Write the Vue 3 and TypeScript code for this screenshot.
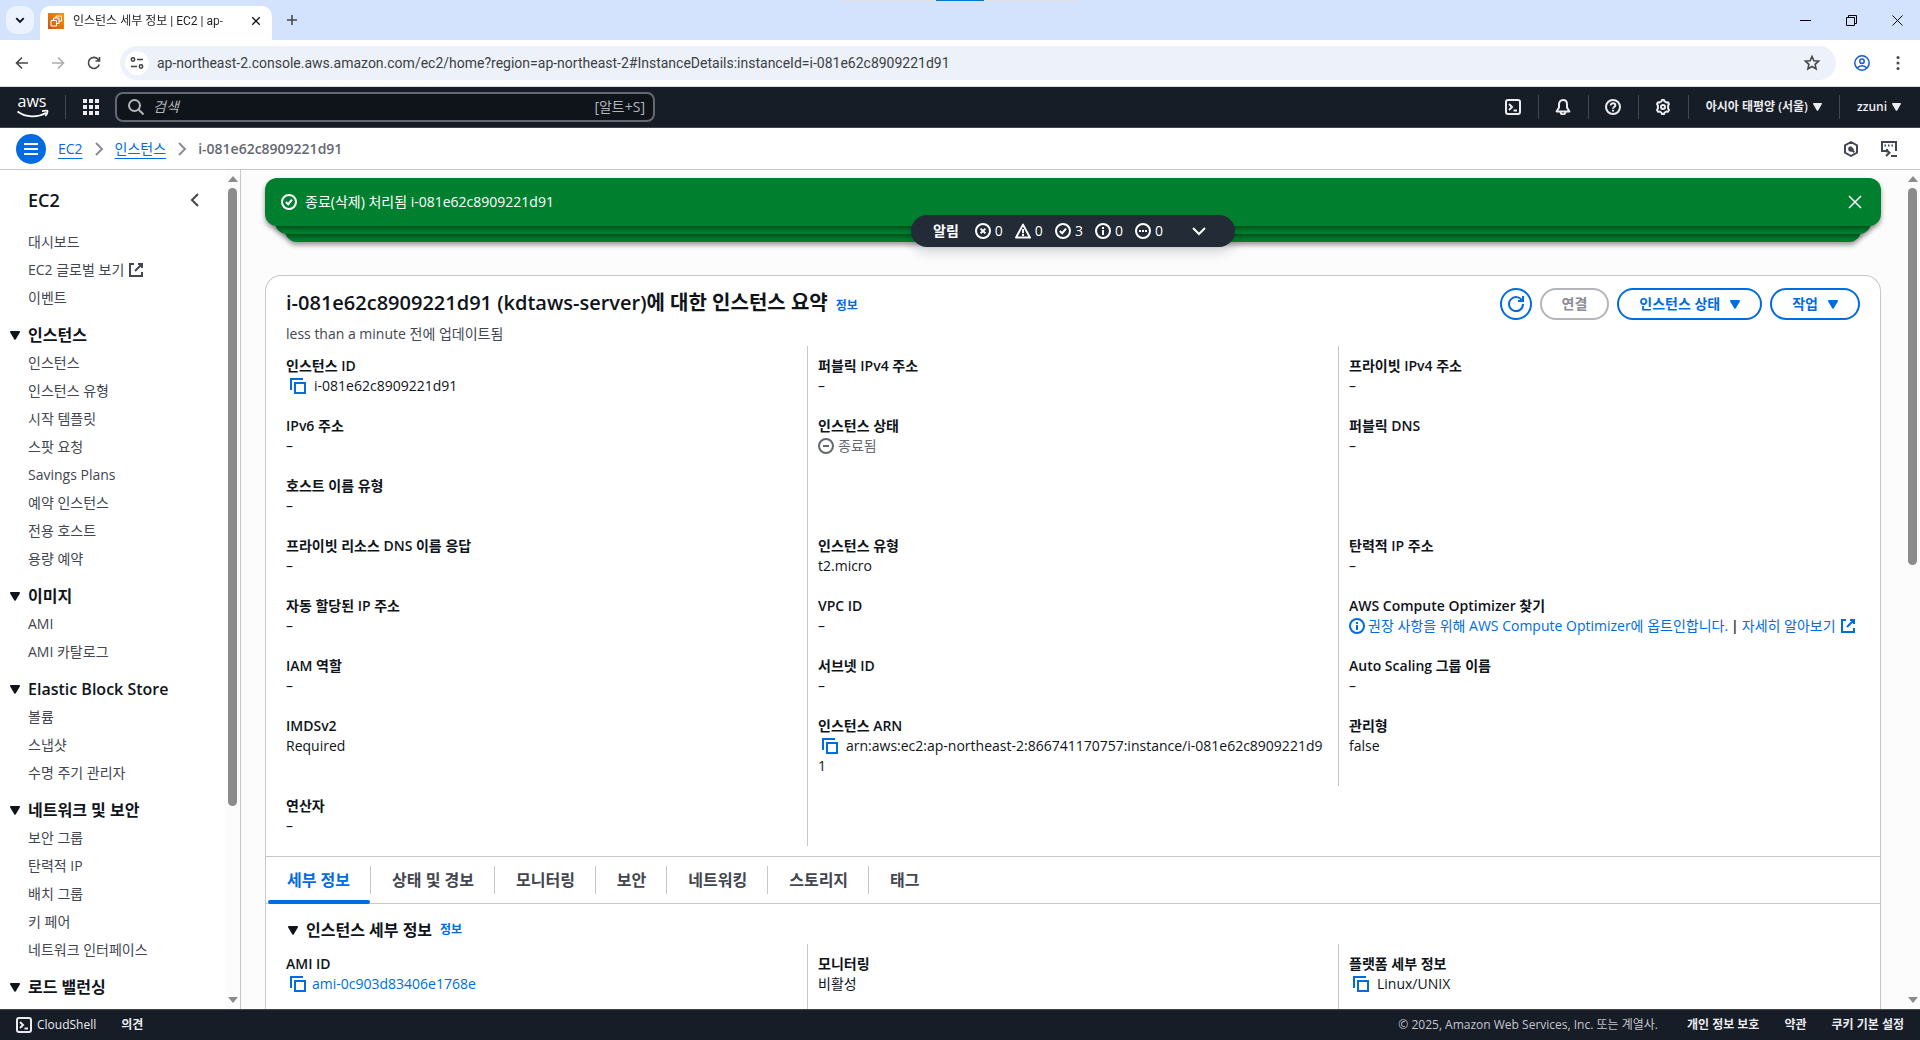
<script setup lang="ts">
import { ref } from 'vue'

interface NavLink {
  label: string
  external?: boolean
}

interface NavSection {
  title: string
  links: NavLink[]
}

interface Field {
  label: string
  value?: string
  kind?: 'copy' | 'copy-link' | 'status' | 'optimizer' | 'arn'
}

const topLinks: NavLink[] = [
  { label: '대시보드' },
  { label: 'EC2 글로벌 보기', external: true },
  { label: '이벤트' },
]

const toLinks = (...labels: string[]): NavLink[] => labels.map((label) => ({ label }))

const sections: NavSection[] = [
  {
    title: '인스턴스',
    links: toLinks('인스턴스', '인스턴스 유형', '시작 템플릿', '스팟 요청', 'Savings Plans', '예약 인스턴스', '전용 호스트', '용량 예약'),
  },
  { title: '이미지', links: toLinks('AMI', 'AMI 카탈로그') },
  { title: 'Elastic Block Store', links: toLinks('볼륨', '스냅샷', '수명 주기 관리자') },
  { title: '네트워크 및 보안', links: toLinks('보안 그룹', '탄력적 IP', '배치 그룹', '키 페어', '네트워크 인터페이스') },
  { title: '로드 밸런싱', links: [] },
]

// An entry without a label is an empty cell that only carries the column rule.
const summary: Field[] = [
  { label: '인스턴스 ID', value: 'i-081e62c8909221d91', kind: 'copy' },
  { label: '퍼블릭 IPv4 주소', value: '–' },
  { label: '프라이빗 IPv4 주소', value: '–' },
  { label: 'IPv6 주소', value: '–' },
  { label: '인스턴스 상태', value: '종료됨', kind: 'status' },
  { label: '퍼블릭 DNS', value: '–' },
  { label: '호스트 이름 유형', value: '–' },
  { label: '' },
  { label: '' },
  { label: '프라이빗 리소스 DNS 이름 응답', value: '–' },
  { label: '인스턴스 유형', value: 't2.micro' },
  { label: '탄력적 IP 주소', value: '–' },
  { label: '자동 할당된 IP 주소', value: '–' },
  { label: 'VPC ID', value: '–' },
  { label: 'AWS Compute Optimizer 찾기', kind: 'optimizer' },
  { label: 'IAM 역할', value: '–' },
  { label: '서브넷 ID', value: '–' },
  { label: 'Auto Scaling 그룹 이름', value: '–' },
  { label: 'IMDSv2', value: 'Required' },
  { label: '인스턴스 ARN', kind: 'arn' },
  { label: '관리형', value: 'false' },
  { label: '연산자', value: '–' },
  { label: '' },
]

const details: Field[] = [
  { label: 'AMI ID', value: 'ami-0c903d83406e1768e', kind: 'copy-link' },
  { label: '모니터링', value: '비활성' },
  { label: '플랫폼 세부 정보', value: 'Linux/UNIX', kind: 'copy' },
]

const tabs = ['세부 정보', '상태 및 경보', '모니터링', '보안', '네트워킹', '스토리지', '태그']
const activeTab = ref(0)

const notices = [
  { icon: 'error', count: 0 },
  { icon: 'warning', count: 0 },
  { icon: 'success', count: 3 },
  { icon: 'info', count: 0 },
  { icon: 'pending', count: 0 },
]

const url = ref('ap-northeast-2.console.aws.amazon.com/ec2/home?region=ap-northeast-2#InstanceDetails:instanceId=i-081e62c8909221d91')
const query = ref('')
</script>

<template>
  <div class="window">
    <svg class="sprite" aria-hidden="true">
      <symbol id="copy" viewBox="0 0 16 16"><path d="M13 1H1v11M5 5h10v10H5z" /></symbol>
      <symbol id="external" viewBox="0 0 16 16"><path d="M10 2h4v4M7 9l7-7M14 10v4H2V2h4" /></symbol>
      <symbol id="success" viewBox="0 0 16 16"><circle cx="8" cy="8" r="7" /><path d="m4.8 8 2.4 2.2 3.8-4.6" /></symbol>
      <symbol id="error" viewBox="0 0 16 16"><circle cx="8" cy="8" r="7" /><path d="m5.6 5.6 4.8 4.8M10.4 5.6l-4.8 4.8" /></symbol>
      <symbol id="warning" viewBox="0 0 16 16"><path d="M8 1.6 15 14.6H1zM8 6v4.2M8 11v2" stroke-linejoin="round" /></symbol>
      <symbol id="info" viewBox="0 0 16 16"><circle cx="8" cy="8" r="7" /><path d="M8 7v5M8 4v2" /></symbol>
      <symbol id="pending" viewBox="0 0 16 16"><circle cx="8" cy="8" r="7" /><path d="M4 8h2M7 8h2M10 8h2" /></symbol>
      <symbol id="stopped" viewBox="0 0 16 16"><circle cx="8" cy="8" r="7" /><path d="M5 8h6" /></symbol>
      <symbol id="refresh" viewBox="0 0 16 16"><path d="M15 0v5h-5M15 8A7 7 0 1 1 14.3 5" /></symbol>
      <symbol id="close" viewBox="0 0 16 16"><path d="m2 2 12 12M14 2 2 14" /></symbol>
      <symbol id="down" viewBox="0 0 16 16"><path d="m2 5 6 6 6-6" /></symbol>
      <symbol id="left" viewBox="0 0 16 16"><path d="M11 2 5 8l6 6" /></symbol>
      <symbol id="right" viewBox="0 0 16 16"><path d="m5 2 6 6-6 6" /></symbol>
      <symbol id="caret" viewBox="0 0 10 9"><path class="solid" d="M1 0h8a1 1 0 0 1 .8 1.5l-4 6.8a1 1 0 0 1-1.6 0l-4-6.8A1 1 0 0 1 1 0z" /></symbol>
      <symbol id="shell" viewBox="0 0 16 16"><rect x="1" y="1" width="14" height="14" rx="2" /><path d="m4 5 3 3-3 3M8.5 11.5H12" /></symbol>
      <symbol id="bell" viewBox="0 0 16 16"><path d="M8 1C5.4 1 4 3 4 5.4v3.2L1.6 12.5h12.8L12 8.6V5.4C12 3 10.6 1 8 1z" stroke-linejoin="round" /><path d="M5.6 13c0 3.3 4.8 3.3 4.8 0" /></symbol>
      <symbol id="help" viewBox="0 0 16 16"><circle cx="8" cy="8" r="7" /><path d="M5.8 6.4c0-3 4.5-2.7 4.5 0C10.3 8 8 8 8 9.8M8 10.7v1.8" /></symbol>
      <symbol id="gear" viewBox="0 0 16 16"><path d="M6.3 2.5 7 1h2l.7 1.5 1.6.9 1.7-.1 1 1.700-.9 1.500v3l.9 1.500-1 1.700-1.700-.1-1.600.9L9 15H7l-.7-1.500-1.600-.9-1.700.1L2 11l.9-1.500v-3L2 5l1-1.700 1.700.1z" stroke-linejoin="round" /><circle cx="8" cy="8" r="2" /></symbol>
      <symbol id="search" viewBox="0 0 16 16"><circle cx="6.5" cy="6.5" r="5.5" /><path d="m10.5 10.5 5 5" /></symbol>
      <symbol id="grid" viewBox="0 0 16 16"><path class="solid" d="M0 0h4v4H0zM6 0h4v4H6zM12 0h4v4h-4zM0 6h4v4H0zM6 6h4v4H6zM12 6h4v4h-4zM0 12h4v4H0zM6 12h4v4H6zM12 12h4v4h-4z" /></symbol>
      <symbol id="menu" viewBox="0 0 16 16"><path d="M1 3h14M1 8h14M1 13h14" /></symbol>
      <symbol id="hexagon" viewBox="0 0 16 16"><path d="m8 1 6 3.4v7.2L8 15l-6-3.400V4.400z" stroke-linejoin="round" /><path class="solid" d="M8 5.200A2.800 2.800 0 1 0 10.800 8z" /><path d="m8 8 3.200 3.200" /></symbol>
      <symbol id="tour" viewBox="0 0 16 16"><path d="M5 10H1V1h14v9M10 15h6M6 8v3.500M5 15l3.500-3.200L5 8.500" /><path d="M3.500 4.500h1.500M7 4.500h1.500M10.500 4.500H12" /></symbol>
      <symbol id="up-arrow" viewBox="0 0 10 6"><path class="solid" d="M0 6 5 0l5 6z" /></symbol>
      <symbol id="down-arrow" viewBox="0 0 10 6"><path class="solid" d="m0 0 5 6 5-6z" /></symbol>
    </svg>

    <div class="tab-strip">
      <button class="tab-search" aria-label="탭 검색"><svg class="icon tiny"><use href="#down" /></svg></button>
      <div class="browser-tab">
        <svg class="favicon" viewBox="0 0 16 16">
          <defs>
            <linearGradient id="ec2" x1="0" y1="1" x2="1" y2="0"><stop stop-color="#c8511b" /><stop offset="1" stop-color="#f90" /></linearGradient>
          </defs>
          <path d="M0 0h16v16H0z" fill="url(#ec2)" />
          <path d="M3 7.500h5.500V13H3zM5.500 7.500V5H11v5.500H8.500M8 5V3h5.500v5.200H11" fill="none" stroke="#fff" stroke-width="1" />
        </svg>
        <span class="tab-title">인스턴스 세부 정보 | EC2 | ap-</span>
        <button class="bare" aria-label="탭 닫기"><svg class="icon tab-close"><use href="#close" /></svg></button>
      </div>
      <button class="bare new-tab" aria-label="새 탭">
        <svg class="chrome-icon" viewBox="0 0 20 20"><path d="M10 5v10M5 10h10" /></svg>
      </button>
      <div class="snap-bar"><i></i></div>
      <div class="window-controls">
        <button class="bare" aria-label="최소화"><svg class="win" viewBox="0 0 11 11"><path d="M0 5.500h11" /></svg></button>
        <button class="bare" aria-label="이전 크기로 복원"><svg class="win" viewBox="0 0 11 11"><path d="M.5 2.500h8v8h-8zM2.500 2.500v-2h8v8h-2" /></svg></button>
        <button class="bare" aria-label="닫기"><svg class="win" viewBox="0 0 11 11"><path d="m.5.5 10 10M10.500.5l-10 10" /></svg></button>
      </div>
    </div>

    <div class="toolbar">
      <button class="bare" aria-label="뒤로"><svg class="chrome-icon" viewBox="0 0 20 20"><path d="M16 10H5M10 4.500 4.500 10l5.500 5.500" /></svg></button>
      <button class="bare faded" aria-label="앞으로"><svg class="chrome-icon" viewBox="0 0 20 20"><path d="M4 10h11M10 4.500l5.500 5.500-5.500 5.500" /></svg></button>
      <button class="bare" aria-label="새로고침"><svg class="chrome-icon" viewBox="0 0 20 20"><path d="M15.200 11.500A5.500 5.500 0 1 1 14 6.200L15.500 8M15.500 4v4h-4" /></svg></button>
      <label class="address">
        <span class="site-info">
          <svg viewBox="0 0 16 16"><circle cx="4" cy="4.500" r="1.700" /><path d="M8 4.500h6M2 11.500h6" /><circle cx="12" cy="11.500" r="1.700" /></svg>
        </span>
        <input v-model="url" type="text" aria-label="주소창" />
        <svg class="chrome-icon" viewBox="0 0 20 20"><path d="m10 3.500 1.900 4.300 4.700.4-3.500 3.100 1 4.600L10 13.500l-4.100 2.400 1-4.600-3.500-3.100 4.700-.4z" /></svg>
      </label>
      <div class="browser-tools">
        <button class="bare" aria-label="프로필">
          <svg class="profile" viewBox="0 0 16 16"><circle cx="8" cy="8" r="7.200" /><circle cx="8" cy="6.200" r="2.200" /><path d="M3.200 13c2.600-3 7-3 9.600 0" /></svg>
        </button>
        <button class="bare" aria-label="메뉴">
          <svg class="dots" viewBox="0 0 4 16"><circle cx="2" cy="2.500" r="1.500" /><circle cx="2" cy="8" r="1.500" /><circle cx="2" cy="13.500" r="1.500" /></svg>
        </button>
      </div>
    </div>

    <header class="aws-bar">
      <a class="logo" href="#" aria-label="AWS">
        <svg viewBox="0 0 32 24">
          <text x="1" y="12">aws</text>
          <path d="M1 16.500c8.500 6.200 20 6.400 28.500 1.200" />
          <path d="M25.500 16.200c3-.9 5.600-.7 5.600-.2s-.5 3-2.300 5" />
        </svg>
      </a>
      <button class="bare services" aria-label="서비스"><svg class="icon"><use href="#grid" /></svg></button>
      <label class="search">
        <svg class="icon"><use href="#search" /></svg>
        <input v-model="query" type="text" placeholder="검색" aria-label="검색" />
        <span>[알트+S]</span>
      </label>
      <nav class="aws-tools">
        <button class="bare tool" aria-label="CloudShell"><svg class="icon"><use href="#shell" /></svg></button>
        <button class="bare tool" aria-label="알림"><svg class="icon"><use href="#bell" /></svg></button>
        <button class="bare tool" aria-label="도움말"><svg class="icon"><use href="#help" /></svg></button>
        <button class="bare tool" aria-label="설정"><svg class="icon"><use href="#gear" /></svg></button>
        <button class="bare menu-button">아시아 태평양 (서울)<svg class="caret small"><use href="#caret" /></svg></button>
        <button class="bare menu-button">zzuni<svg class="caret small"><use href="#caret" /></svg></button>
      </nav>
    </header>

    <div class="crumb-bar">
      <button class="hamburger" aria-label="탐색 메뉴"><svg class="icon"><use href="#menu" /></svg></button>
      <nav class="crumbs">
        <a href="#">EC2</a>
        <svg class="icon sep"><use href="#right" /></svg>
        <a href="#">인스턴스</a>
        <svg class="icon sep"><use href="#right" /></svg>
        <strong>i-081e62c8909221d91</strong>
      </nav>
      <div class="crumb-tools">
        <button class="bare" aria-label="Amazon Q"><svg class="icon"><use href="#hexagon" /></svg></button>
        <button class="bare" aria-label="튜토리얼"><svg class="icon"><use href="#tour" /></svg></button>
      </div>
    </div>

    <div class="body">
      <aside class="sidebar">
        <div class="side-content">
          <div class="side-head">
            <h2>EC2</h2>
            <button class="bare" aria-label="탐색 닫기"><svg class="icon"><use href="#left" /></svg></button>
          </div>
          <ul>
            <li v-for="link in topLinks" :key="link.label">
              <a href="#">{{ link.label }}<svg v-if="link.external" class="icon ext"><use href="#external" /></svg></a>
            </li>
          </ul>
          <section v-for="section in sections" :key="section.title">
            <h3><svg class="caret"><use href="#caret" /></svg>{{ section.title }}</h3>
            <ul>
              <li v-for="link in section.links" :key="link.label"><a href="#">{{ link.label }}</a></li>
            </ul>
          </section>
        </div>
        <div class="scrollbar side-scroll">
          <svg><use href="#up-arrow" /></svg>
          <div class="track"><i></i></div>
          <svg><use href="#down-arrow" /></svg>
        </div>
      </aside>

      <main>
        <div class="page">
          <div class="flashbar">
            <div class="flash" role="status">
              <svg class="icon"><use href="#success" /></svg>
              <span>종료(삭제) 처리됨 i-081e62c8909221d91</span>
              <button class="bare" aria-label="닫기"><svg class="icon thin"><use href="#close" /></svg></button>
            </div>
            <div class="layer second"></div>
            <div class="layer third"></div>
            <div class="notice-anchor">
              <button class="notices">
                <b>알림</b>
                <span class="counts">
                  <span v-for="notice in notices" :key="notice.icon"><svg class="icon"><use :href="'#' + notice.icon" /></svg>{{ notice.count }}</span>
                </span>
                <svg class="icon"><use href="#down" /></svg>
              </button>
            </div>
          </div>

          <div class="card">
            <div class="card-head">
              <div class="heading">
                <div class="title-line">
                  <h1>i-081e62c8909221d91 (kdtaws-server)에 대한 인스턴스 요약</h1>
                  <a class="info" href="#">정보</a>
                </div>
                <p>less than a minute 전에 업데이트됨</p>
              </div>
              <div class="actions">
                <button class="btn round" aria-label="새로 고침"><svg class="icon"><use href="#refresh" /></svg></button>
                <button class="btn" disabled>연결</button>
                <button class="btn">인스턴스 상태<svg class="caret"><use href="#caret" /></svg></button>
                <button class="btn">작업<svg class="caret"><use href="#caret" /></svg></button>
              </div>
            </div>

            <dl class="fields">
              <div v-for="(field, i) in summary" :key="i">
                <template v-if="field.label">
                  <dt>{{ field.label }}</dt>
                  <dd v-if="field.kind === 'copy'"><button class="bare copy" aria-label="복사"><svg class="icon"><use href="#copy" /></svg></button>{{ field.value }}</dd>
                  <dd v-else-if="field.kind === 'status'" class="stopped"><svg class="icon lead"><use href="#stopped" /></svg>{{ field.value }}</dd>
                  <dd v-else-if="field.kind === 'optimizer'" class="optimizer">
                    <svg class="icon blue"><use href="#info" /></svg>
                    <a href="#">권장 사항을 위해 AWS Compute Optimizer에 옵트인합니다.</a>
                    <b>|</b>
                    <a href="#">자세히 알아보기<svg class="icon ext"><use href="#external" /></svg></a>
                  </dd>
                  <dd v-else-if="field.kind === 'arn'"><button class="bare copy" aria-label="복사"><svg class="icon"><use href="#copy" /></svg></button>arn:aws:ec2:ap-northeast-2:866741170757:instance/i-081e62c8909221d9<br />1</dd>
                  <dd v-else>{{ field.value }}</dd>
                </template>
              </div>
            </dl>

            <div class="tabs" role="tablist">
              <div v-for="(tab, i) in tabs" :key="tab" class="tab">
                <button role="tab" :class="{ active: i === activeTab }" :aria-selected="i === activeTab" @click="activeTab = i">{{ tab }}</button>
              </div>
            </div>

            <div class="expander">
              <svg class="caret"><use href="#caret" /></svg>
              <h2>인스턴스 세부 정보</h2>
              <a class="info" href="#">정보</a>
            </div>
            <dl class="fields grow">
              <div v-for="field in details" :key="field.label">
                <dt>{{ field.label }}</dt>
                <dd>
                  <button v-if="field.kind" class="bare copy" :class="{ tight: field.kind === 'copy-link' }" aria-label="복사"><svg class="icon"><use href="#copy" /></svg></button>
                  <a v-if="field.kind === 'copy-link'" href="#">{{ field.value }}</a>
                  <template v-else>{{ field.value }}</template>
                </dd>
              </div>
            </dl>
          </div>
        </div>
        <div class="scrollbar page-scroll">
          <svg><use href="#up-arrow" /></svg>
          <div class="track"><i></i></div>
          <svg><use href="#down-arrow" /></svg>
        </div>
      </main>
    </div>

    <footer>
      <a class="cloudshell" href="#"><svg class="icon"><use href="#shell" /></svg>CloudShell</a>
      <a href="#">의견</a>
      <span>© 2025, Amazon Web Services, Inc. 또는 계열사.</span>
      <a href="#">개인 정보 보호</a>
      <a href="#">약관</a>
      <a href="#">쿠키 기본 설정</a>
    </footer>
  </div>
</template>

<style>
body {
  background: #fff;
}
</style>

<style scoped>
.window {
  position: relative;
  display: flex;
  flex-direction: column;
  height: 100vh;
  overflow: hidden;
  color: #0f141a;
  font: 14px/20px "Open Sans", "Noto Sans CJK KR", sans-serif;
}

*,
*::before,
*::after {
  box-sizing: border-box;
}

h1, h2, h3, p, ul, dl, dd {
  margin: 0;
  padding: 0;
}

h1, h2, h3, b, strong {
  font-weight: 600;
}

ul {
  list-style: none;
}

a {
  color: #006ce0;
  text-decoration: none;
}

button,
input {
  font: inherit;
  color: inherit;
}

.bare {
  display: inline-flex;
  align-items: center;
  justify-content: center;
  padding: 0;
  border: 0;
  background: none;
}

.sprite {
  position: absolute;
  width: 0;
  height: 0;
}

.icon {
  flex: none;
  width: 16px;
  height: 16px;
  fill: none;
  stroke: currentColor;
  stroke-width: 2;
}

.thin {
  stroke-width: 1.5;
}

.solid {
  fill: currentColor;
  stroke: none;
}

.caret {
  flex: none;
  width: 10px;
  height: 9px;
}

/* Browser frame */
.tab-strip {
  position: relative;
  display: flex;
  flex: none;
  align-items: center;
  height: 40px;
  padding-left: 6px;
  background: #d3e3fd;
  font-family: Roboto, "Noto Sans CJK KR", sans-serif;
  font-size: 12px;
}

.tab-search {
  display: flex;
  flex: none;
  align-items: center;
  justify-content: center;
  width: 28px;
  height: 28px;
  border: 0;
  border-radius: 10px;
  background: #ecf3fe;
}

.tiny {
  width: 10px;
  height: 10px;
  stroke-width: 3;
}

.browser-tab {
  display: flex;
  flex: none;
  align-self: flex-end;
  align-items: center;
  width: 232px;
  height: 34px;
  margin-left: 6px;
  padding: 0 11px 4px 8px;
  border-radius: 10px 10px 0 0;
  background: #fff;
}

.favicon {
  flex: none;
  width: 16px;
  height: 16px;
}

.tab-title {
  flex: 1;
  margin: 0 12px 0 9px;
  white-space: nowrap;
  color: #1f1f1f;
  mask-image: linear-gradient(90deg, #000 86%, transparent);
}

.tab-close {
  width: 10px;
  height: 10px;
}

.chrome-icon {
  flex: none;
  width: 20px;
  height: 20px;
  fill: none;
  stroke: #474747;
  stroke-width: 1.6;
}

.new-tab {
  margin-left: 10px;
}

.snap-bar {
  position: absolute;
  top: 0;
  right: 0;
  left: 0;
  display: flex;
  justify-content: center;
  width: 240px;
  height: 1px;
  margin: 0 auto;
  background: #e2e2e2;
}

.snap-bar i {
  width: 48px;
  background: #0078d4;
}

.window-controls {
  display: flex;
  align-self: stretch;
  margin-left: auto;
}

.window-controls .bare {
  width: 46px;
}

.win {
  width: 11px;
  height: 11px;
  fill: none;
  stroke: #000;
  stroke-width: 1;
}

.toolbar {
  display: flex;
  flex: none;
  align-items: center;
  gap: 16px;
  height: 47px;
  padding: 0 20px 0 12px;
  border-bottom: 1px solid #dadce0;
  background: #fff;
}

.faded {
  opacity: 0.45;
}

.address {
  display: flex;
  flex: 1;
  align-items: center;
  height: 34px;
  padding: 0 14px 0 5px;
  border-radius: 17px;
  background: #ecf1fa;
}

.site-info {
  display: flex;
  align-items: center;
  justify-content: center;
  width: 24px;
  height: 24px;
  border-radius: 12px;
  background: #fff;
}

.site-info svg {
  width: 16px;
  height: 16px;
  fill: none;
  stroke: #3c4043;
  stroke-width: 1.5;
}

.address input {
  flex: 1;
  min-width: 0;
  margin-left: 8px;
  padding: 0;
  border: 0;
  outline: 0;
  background: none;
  color: #3c3f43;
  font-family: Roboto, "Noto Sans CJK KR", sans-serif;
}

.browser-tools {
  display: flex;
  gap: 26px;
  padding-left: 2px;
}

.profile {
  width: 16px;
  height: 16px;
  fill: none;
  stroke: #1558d6;
  stroke-width: 1.5;
}

.dots {
  width: 4px;
  height: 16px;
  fill: #474747;
}

/* AWS header */
.aws-bar {
  display: flex;
  flex: none;
  align-items: center;
  height: 41px;
  padding: 0 4px 0 16px;
  border-bottom: 1px solid #424650;
  background: #161d26;
  color: #ebebf0;
}

.logo {
  display: flex;
  align-items: center;
  width: 50px;
  height: 24px;
  border-right: 1px solid #424650;
}

.logo svg {
  width: 33px;
  height: 24px;
  overflow: visible;
  fill: none;
  stroke: #fff;
  stroke-width: 1.8;
}

.logo text {
  fill: #fff;
  stroke: none;
  font-size: 16px;
  font-weight: 500;
}

.services {
  width: 49px;
}

.search {
  display: flex;
  align-items: center;
  width: 540px;
  height: 30px;
  padding: 0 8px 0 11px;
  border: 2px solid #656871;
  border-radius: 8px;
  background: #0f141a;
  color: #b4b4bb;
}

.search input {
  flex: 1;
  min-width: 0;
  margin-left: 9px;
  padding: 0;
  border: 0;
  outline: 0;
  background: none;
}

.search input::placeholder {
  color: #b4b4bb;
  font-style: italic;
}

.aws-tools {
  display: flex;
  margin-left: auto;
}

.tool {
  width: 50px;
  height: 24px;
  border-right: 1px solid #424650;
}

.menu-button {
  gap: 5px;
  height: 24px;
  padding: 0 17px;
  font-size: 12px;
  font-weight: 600;
}

.menu-button:last-child {
  padding-right: 15px;
  border-left: 1px solid #424650;
}

.small {
  width: 9px;
  height: 8px;
}

/* Breadcrumbs */
.crumb-bar {
  display: flex;
  flex: none;
  align-items: center;
  height: 42px;
  padding: 0 23px 0 16px;
  border-bottom: 1px solid #c6c6cd;
}

.hamburger {
  display: flex;
  align-items: center;
  justify-content: center;
  width: 30px;
  height: 30px;
  padding: 0;
  border: 0;
  border-radius: 15px;
  background: #006ce0;
  color: #fff;
}

.crumbs {
  display: flex;
  align-items: center;
  gap: 8px;
  margin-left: 12px;
}

.crumbs a {
  text-decoration: underline;
  text-underline-offset: 4px;
}

.crumbs strong {
  color: #656871;
}

.sep {
  color: #8c8c94;
}

.crumb-tools {
  display: flex;
  gap: 22px;
  margin-left: auto;
  color: #424650;
}

/* Side navigation */
.body {
  display: flex;
  flex: 1;
  min-height: 0;
}

.sidebar {
  display: flex;
  flex: none;
  width: 241px;
  border-right: 1px solid #c6c6cd;
}

.side-content {
  flex: 1;
  overflow: hidden;
  padding: 20px 0 0 28px;
}

.side-head {
  display: flex;
  justify-content: space-between;
  margin-bottom: 22px;
  padding-right: 22px;
  color: #424650;
}

.side-head h2 {
  color: #0f141a;
  font-size: 18px;
  line-height: 20px;
}

.side-content ul {
  display: flex;
  flex-direction: column;
  gap: 8px;
}

.side-content li a {
  display: flex;
  align-items: center;
  color: #424650;
}

.ext {
  margin-left: 4px;
}

.side-content section {
  margin-top: 17px;
}

.side-content h3 {
  display: flex;
  align-items: center;
  gap: 8px;
  margin: 0 0 8px -18px;
  font-size: 16px;
  line-height: 20px;
}

.scrollbar {
  display: flex;
  flex: none;
  flex-direction: column;
  align-items: center;
  width: 15px;
  padding: 6px 0;
  background: #fcfcfc;
  color: #8b8b8b;
}

.scrollbar svg {
  width: 10px;
  height: 6px;
}

.track {
  flex: 1;
  padding: 6px 0;
}

.track i {
  display: block;
  width: 9px;
  border-radius: 5px;
  background: #8b8b8b;
}

.side-scroll .track i {
  height: 77%;
}

.page-scroll .track i {
  height: 47%;
}

/* Page */
main {
  display: flex;
  flex: 1;
  min-width: 0;
  background: #fcfcfd;
}

.page {
  display: flex;
  flex: 1;
  flex-direction: column;
  min-width: 0;
  overflow: hidden;
  padding: 8px 24px 0;
}

.flashbar {
  position: relative;
  z-index: 0;
  margin-bottom: 33px;
}

.flash {
  position: relative;
  z-index: 3;
  display: flex;
  align-items: center;
  gap: 8px;
  height: 48px;
  padding: 0 18px 0 16px;
  border-radius: 12px;
  background: #00802f;
  box-shadow: 0 3px 5px rgba(0, 0, 0, 0.4);
  color: #fff;
}

.flash .bare {
  margin-left: auto;
}

.layer {
  position: relative;
  height: 20px;
  margin-top: -12px;
  border-radius: 0 0 12px 12px;
  background: #00802f;
  box-shadow: 0 3px 5px rgba(0, 0, 0, 0.4);
}

.second {
  z-index: 2;
  margin-right: 10px;
  margin-left: 10px;
}

.third {
  z-index: 1;
  margin-right: 20px;
  margin-left: 20px;
}

.notice-anchor {
  position: absolute;
  z-index: 4;
  right: 0;
  bottom: -5px;
  left: 0;
  display: flex;
  justify-content: center;
}

.notices {
  display: flex;
  align-items: center;
  height: 32px;
  padding: 0 28px 0 22px;
  border: 0;
  border-radius: 16px;
  background: #232b37;
  box-shadow: 0 6px 12px rgba(0, 7, 22, 0.14);
  color: #fff;
}

.counts {
  display: flex;
  gap: 12px;
  margin: 0 28px 0 16px;
}

.counts span {
  display: flex;
  align-items: center;
  gap: 4px;
}

.card {
  display: flex;
  flex: 1 0 auto;
  flex-direction: column;
  border: 1px solid #c6c6cd;
  border-bottom: 0;
  border-radius: 16px 16px 0 0;
  background: #fff;
}

.card-head {
  display: flex;
  justify-content: space-between;
  padding: 12px 20px 2px;
}

.title-line {
  display: flex;
  align-items: baseline;
  gap: 8px;
  height: 32px;
  margin-bottom: 4px;
}

h1 {
  font-size: 20px;
  line-height: 30px;
}

.info {
  font-size: 12px;
  line-height: 16px;
  font-weight: 600;
}

.card-head p {
  color: #424650;
}

.actions {
  display: flex;
  gap: 8px;
}

.btn {
  display: flex;
  align-items: center;
  gap: 10px;
  height: 32px;
  padding: 0 20px;
  border: 2px solid #006ce0;
  border-radius: 16px;
  background: #fff;
  color: #006ce0;
  font-weight: 600;
}

.btn:disabled {
  border-color: #b4b4bb;
  color: #8c8c94;
}

.round {
  padding: 0 6px;
}

.fields {
  display: grid;
  grid-template-columns: repeat(3, 1fr);
  margin: 0 11px 0 10px;
}

.grow {
  flex: 1;
}

.fields > div {
  min-height: 60px;
  padding: 10px;
  border-left: 1px solid #c6c6cd;
}

.fields > div:nth-child(3n + 1) {
  border-left: 0;
}

dt {
  font-weight: 600;
}

dd {
  white-space: nowrap;
}

dd .icon {
  vertical-align: -3px;
}

.copy {
  margin: 0 8px 0 4px;
  color: #006ce0;
  vertical-align: -3px;
}

.tight {
  margin-right: 6px;
}

.stopped {
  color: #656871;
}

.lead {
  margin-right: 4px;
}

.optimizer {
  display: flex;
  align-items: center;
  gap: 3px;
}

.optimizer a {
  display: flex;
  align-items: center;
}

.blue {
  color: #006ce0;
}

.tabs {
  display: flex;
  gap: 1px;
  height: 48px;
  margin-top: 10px;
  padding-left: 1px;
  border-top: 1px solid #c6c6cd;
  border-bottom: 1px solid #c6c6cd;
}

.tab {
  display: flex;
  align-items: center;
}

.tab::after {
  width: 1px;
  height: 28px;
  background: #c6c6cd;
  content: "";
}

.tab:last-child::after {
  display: none;
}

.tab button {
  position: relative;
  height: 46px;
  padding: 0 20px;
  border: 0;
  background: none;
  color: #424650;
  font-size: 16px;
  font-weight: 600;
}

.tab .active {
  color: #006ce0;
}

.tab .active::after {
  position: absolute;
  right: 0;
  bottom: -1px;
  left: 1px;
  height: 4px;
  border-radius: 2px;
  background: #006ce0;
  content: "";
}

.expander {
  display: flex;
  align-items: center;
  gap: 8px;
  padding: 16px 22px 4px;
}

.expander h2 {
  font-size: 16px;
  line-height: 20px;
}

/* Footer */
footer {
  display: flex;
  flex: none;
  align-items: center;
  gap: 25px;
  height: 31px;
  padding: 0 16px;
  border-top: 1px solid #424650;
  background: #161d26;
  color: #c6c6cd;
  font-size: 12px;
}

footer a {
  display: flex;
  align-items: center;
  gap: 5px;
  color: #ebebf0;
  font-weight: 600;
}

footer .cloudshell {
  font-weight: 400;
}

footer span {
  margin: 0 4px 0 auto;
}
</style>
